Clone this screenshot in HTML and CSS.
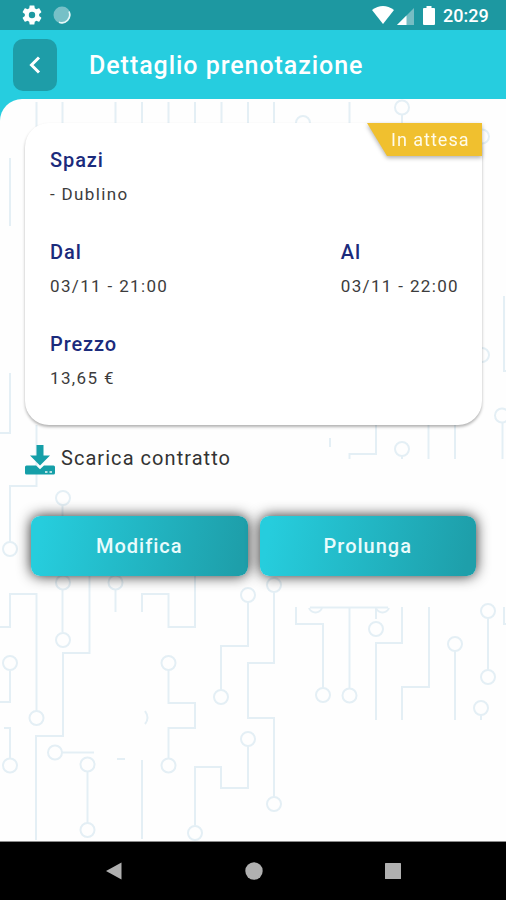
FILE: index.html
```
<!DOCTYPE html>
<html lang="it">
<head>
  <meta charset="UTF-8" />
  <meta name="viewport" content="width=device-width, initial-scale=1.0" />
  <title>Dettaglio prenotazione</title>
  <link rel="stylesheet" href="styles.css">
</head>
<body>
  <!-- Status bar -->
  <div class="status-bar">
    <div class="status-left">
      <svg width="20" height="20" viewBox="2 2 20 20"><path fill="#fff" d="M19.14 12.94c.04-.3.06-.61.06-.94 0-.32-.02-.64-.07-.94l2.03-1.58c.18-.14.23-.41.12-.61l-1.92-3.32c-.12-.22-.37-.29-.59-.22l-2.39.96c-.5-.38-1.03-.7-1.62-.94l-.36-2.54c-.04-.24-.24-.41-.48-.41h-3.84c-.24 0-.43.17-.47.41l-.36 2.54c-.59.24-1.13.57-1.62.94l-2.39-.96c-.22-.08-.47 0-.59.22L2.74 8.87c-.12.21-.08.47.12.61l2.03 1.58c-.05.3-.09.63-.09.94s.02.64.07.94l-2.03 1.58c-.18.14-.23.41-.12.61l1.92 3.32c.12.22.37.29.59.22l2.39-.96c.5.38 1.03.7 1.62.94l.36 2.54c.05.24.24.41.48.41h3.84c.24 0 .44-.17.47-.41l.36-2.54c.59-.24 1.13-.56 1.62-.94l2.39.96c.22.08.47 0 .59-.22l1.92-3.32c.12-.22.07-.47-.12-.61l-2.01-1.58zM12 15.2A3.2 3.2 0 1 1 12 8.8a3.2 3.2 0 0 1 0 6.4z"/></svg>
      <svg width="18" height="18" viewBox="0 0 18 18">
        <circle cx="9" cy="9" r="8.5" fill="#76c0c7"/>
        <path d="M16 5.5A8 8 0 0 1 6 16.300" fill="none" stroke="#e6f7f8" stroke-width="1.6"/>
      </svg>
    </div>
    <div class="status-right">
      <svg width="22" height="18" viewBox="0 0 22 18"><path fill="#fff" d="M0 4Q11-4 22 4L11 18z"/></svg>
      <svg class="signal" width="17" height="17" viewBox="0 0 17 17">
        <path fill="#76bdc3" d="M17 0v17H0z"/>
        <path fill="#fff" d="M9.500 7.500v9.500H0z"/>
      </svg>
      <svg class="battery" width="12" height="19" viewBox="0 0 12 19"><path fill="#fff" d="M3.500 0h5v2H11q1 0 1 1v15q0 1-1 1H1q-1 0-1-1V3q0-1 1-1h2.500z"/></svg>
      <span class="clock">20:29</span>
    </div>
  </div>

  <!-- Header -->
  <header>
    <button class="back-button" aria-label="Indietro">
      <svg width="12" height="18" viewBox="0 0 12 18"><path d="M10 1.500L2.500 9l7.500 7.500" fill="none" stroke="#fff" stroke-width="3"/></svg>
    </button>
    <h1>Dettaglio prenotazione</h1>
  </header>

  <!-- Content -->
  <main>
    <!-- Circuit pattern behind the content -->
    <svg class="circuit" width="506" height="743" viewBox="0 99 506 743">
      <path d="M36.500 102v25M62.500 102v21M115.500 102v21M142 102v21M168.500 102v21M195 102v21M221.500 102v21M248 102v21M274 102v21M349.500 102v21M402 114v9"/>
      <path d="M296 123a7 7 0 0 1 14 0"/>
      <path d="M10 158v68M10 373v60H0M36.500 425v61H10v56M504 296v75h2M62.500 505v18M376 424v30H349.500v5M428.500 424v35M455 424v35M502.500 423v36M402 456v3M330 438v9"/>
      <path d="M62.500 589v43M115.500 589v23M89.500 576v77H63v83H36v104M0 627h10v-33h26.500v117M142 612v-18h26.500v33H195v-51M248 602v44H221v44M274 592v71H248v55h26v79M168.500 670v33H195v25h-26.500v30M248 746v42H221v-21H195v58M0 702h10v-31M4 728h6v31M62 752.500h32M87.500 771v52M142 760v79"/>
      <path d="M296 607v17h27v64M310 607.500h78M349.500 607v81M376 607v12M402 607v36H376v77M429 607v80H402v33M455 651v69M488 618v52M481 715v5M504 607v17h2"/>
      <path d="M309 608a7 7 0 0 0 13 0M376 608a7 7 0 0 0 13 0M145 711q5 7 0 13M117 759h8"/>
      <circle cx="402" cy="107.500" r="7"/>
      <circle cx="482" cy="136.500" r="7"/>
      <circle cx="482" cy="355" r="7"/>
      <circle cx="502" cy="415.500" r="7"/>
      <circle cx="402" cy="449" r="7"/>
      <circle cx="63" cy="498" r="7"/>
      <circle cx="10" cy="549" r="7"/>
      <circle cx="63" cy="582.500" r="7"/>
      <circle cx="115.500" cy="582.500" r="7"/>
      <circle cx="248" cy="595" r="7"/>
      <circle cx="274" cy="585" r="7"/>
      <circle cx="63" cy="640" r="7"/>
      <circle cx="10" cy="663" r="7"/>
      <circle cx="168.500" cy="663" r="7"/>
      <circle cx="221" cy="697" r="7"/>
      <circle cx="36.500" cy="718" r="7"/>
      <circle cx="248" cy="739" r="7"/>
      <circle cx="55" cy="752.500" r="7"/>
      <circle cx="87.500" cy="764.500" r="7"/>
      <circle cx="10" cy="765.500" r="7"/>
      <circle cx="168.500" cy="765.500" r="7"/>
      <circle cx="274" cy="804" r="7"/>
      <circle cx="87.500" cy="830" r="7"/>
      <circle cx="195" cy="833" r="7"/>
      <circle cx="323" cy="695" r="7"/>
      <circle cx="349.500" cy="695.500" r="7"/>
      <circle cx="376" cy="629" r="7"/>
      <circle cx="455" cy="644" r="7"/>
      <circle cx="488" cy="611" r="7"/>
      <circle cx="488" cy="677" r="7"/>
      <circle cx="481" cy="708" r="7"/>
    </svg>

    <section class="card">
      <div class="badge"><span>In attesa</span></div>
      <div class="field">
        <h2>Spazi</h2>
        <p>- Dublino</p>
      </div>
      <div class="dates">
        <div class="field">
          <h2>Dal</h2>
          <p>03/11 - 21:00</p>
        </div>
        <div class="field">
          <h2>Al</h2>
          <p>03/11 - 22:00</p>
        </div>
      </div>
      <div class="field">
        <h2>Prezzo</h2>
        <p>13,65 €</p>
      </div>
    </section>

    <a class="download">
      <svg width="30" height="30" viewBox="0 0 30 30">
        <path fill="#159fa8" d="M11.500 0h7v10.500H25L15 20.500 5 10.500h6.500z"/>
        <path fill="#159fa8" d="M1.500 20.500H11l4 3.700 4-3.700h9.500q1.500 0 1.500 1.500v6q0 1.500-1.500 1.500h-27Q0 29.500 0 28v-6q0-1.500 1.500-1.500z"/>
        <path fill="#b7e0e3" d="M20 26h2.500v2H20zM24.500 26H27v2h-2.500z"/>
      </svg>
      <span>Scarica contratto</span>
    </a>

    <div class="actions">
      <button>Modifica</button>
      <button>Prolunga</button>
    </div>
  </main>

  <!-- Android navigation bar -->
  <footer>
    <svg width="16" height="18" viewBox="0 0 16 18"><path fill="#b0b0b0" d="M15.500.500v17L0 9z"/></svg>
    <svg width="18" height="18" viewBox="0 0 18 18"><circle cx="9" cy="9" r="8.700" fill="#b0b0b0"/></svg>
    <svg width="16" height="16" viewBox="0 0 16 16"><rect width="16" height="16" rx="0.500" fill="#b0b0b0"/></svg>
  </footer>
</body>
</html>
```
FILE: styles.css
```
/* Reset and base styles */
* {
  margin: 0;
  padding: 0;
  box-sizing: border-box;
}
body {
  width: 506px;
  height: 900px;
  display: flex;
  flex-direction: column;
  overflow: hidden;
  background: #26cddf;
  font-family: Roboto, sans-serif;
}
svg {
  display: block;
  flex: none;
}
button {
  border: none;
  font-family: inherit;
  cursor: pointer;
}
/* Status bar */
.status-bar {
  height: 30px;
  display: flex;
  justify-content: space-between;
  padding: 0 17px 0 22px;
  background: #1d98a1;
}
.status-left,
.status-right {
  display: flex;
  align-items: center;
}
.status-left {
  gap: 11px;
}
.signal {
  margin: 2px 0 0 3px;
}
.battery {
  margin-left: 9px;
}
.clock {
  width: 46px;
  margin-left: 8px;
  padding-top: 2px;
  color: #fff;
  font-size: 18px;
  font-weight: 500;
  line-height: 28px;
  white-space: nowrap;
}
/* Header */
header {
  height: 69px;
  display: flex;
  align-items: center;
  padding: 0 13px;
}
.back-button {
  width: 44px;
  height: 52px;
  display: flex;
  align-items: center;
  justify-content: center;
  border-radius: 10px;
  background: #1e9da8;
}
h1 {
  margin-left: 32px;
  padding-top: 2px;
  color: #fff;
  font-size: 25px;
  font-weight: 500;
  letter-spacing: 0.95px;
  line-height: 30px;
  white-space: nowrap;
}
/* Content */
main {
  position: relative;
  height: 743px;
  padding: 24px 24px 0 25px;
  border-bottom: 1px solid #8c8c8c;
  border-radius: 22px 0 0 0;
  background: #fefefe;
  overflow: hidden;
}
.circuit {
  position: absolute;
  top: 0;
  left: 0;
  fill: none;
  stroke: #e4eff5;
  stroke-width: 2;
}
.circuit circle {
  fill: #fefefe;
}
/* Booking card */
.card {
  position: relative;
  width: 457px;
  height: 302px;
  display: flex;
  flex-direction: column;
  gap: 34px;
  padding: 25px 23px 0 25px;
  border-radius: 24px;
  background: #fff;
  box-shadow: 0 2px 3px rgba(0, 0, 0, 0.3);
}
.dates {
  display: flex;
  justify-content: space-between;
}
.field h2 {
  color: #1b2b7c;
  font-size: 20px;
  font-weight: 500;
  letter-spacing: 0.9px;
  line-height: 24px;
}
.field p {
  margin-top: 11px;
  color: #3c3c3c;
  font-size: 17px;
  letter-spacing: 1.35px;
  line-height: 23px;
}
.badge {
  position: absolute;
  top: 0;
  right: 0;
  filter: drop-shadow(0 2px 2px rgba(0, 0, 0, 0.3));
}
.badge span {
  display: block;
  width: 115px;
  height: 33px;
  padding-left: 24px;
  background: #f0c02f;
  clip-path: polygon(0 0, 100% 0, 100% 100%, 20px 100%);
  color: #fffbea;
  font-size: 18px;
  letter-spacing: 1px;
  line-height: 33px;
  white-space: nowrap;
}
/* Contract download */
.download {
  position: relative;
  display: flex;
  gap: 6px;
  margin-top: 20px;
  color: #333;
  font-size: 20px;
  letter-spacing: 1.05px;
  line-height: 27px;
}
/* Action buttons */
.actions {
  position: relative;
  display: flex;
  gap: 12px;
  margin: 41px 6px 0;
}
.actions button {
  flex: 1;
  height: 60px;
  border-radius: 9px;
  background: linear-gradient(100deg, #26cddd 5%, #1e9faa 95%);
  box-shadow: 0 0 14px rgba(0, 0, 0, 0.85);
  color: #e9fbfc;
  font-size: 20px;
  font-weight: 500;
  letter-spacing: 1px;
}
/* Navigation bar */
footer {
  height: 58px;
  display: flex;
  align-items: center;
  justify-content: space-between;
  padding: 0 105px 0 106px;
  background: #000;
}
```
